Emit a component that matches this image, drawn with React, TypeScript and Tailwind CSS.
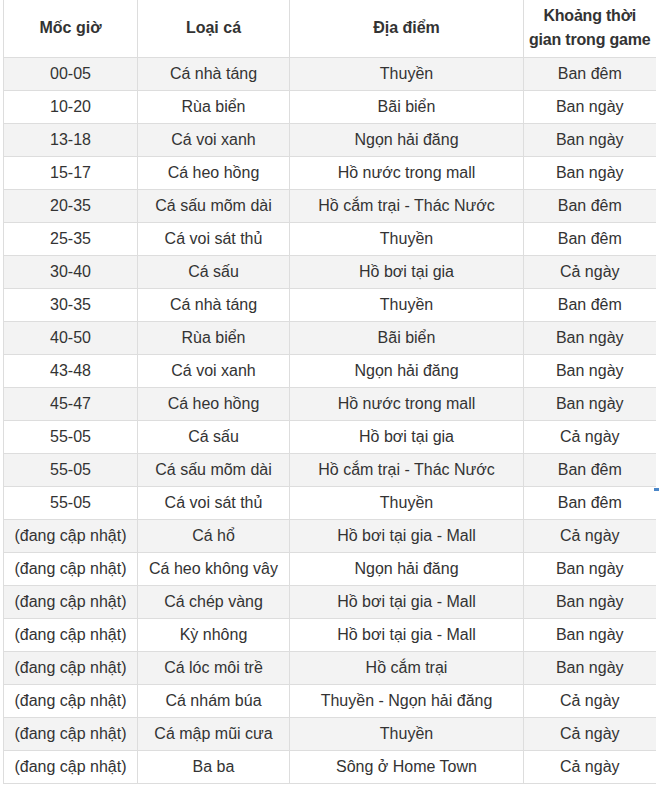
import React from 'react';

const rows: [string, string, string, string][] = [
    ['00-05', 'Cá nhà táng', 'Thuyền', 'Ban đêm'],
    ['10-20', 'Rùa biển', 'Bãi biển', 'Ban ngày'],
    ['13-18', 'Cá voi xanh', 'Ngọn hải đăng', 'Ban ngày'],
    ['15-17', 'Cá heo hồng', 'Hồ nước trong mall', 'Ban ngày'],
    ['20-35', 'Cá sấu mõm dài', 'Hồ cắm trại - Thác Nước', 'Ban đêm'],
    ['25-35', 'Cá voi sát thủ', 'Thuyền', 'Ban đêm'],
    ['30-40', 'Cá sấu', 'Hồ bơi tại gia', 'Cả ngày'],
    ['30-35', 'Cá nhà táng', 'Thuyền', 'Ban đêm'],
    ['40-50', 'Rùa biển', 'Bãi biển', 'Ban ngày'],
    ['43-48', 'Cá voi xanh', 'Ngọn hải đăng', 'Ban ngày'],
    ['45-47', 'Cá heo hồng', 'Hồ nước trong mall', 'Ban ngày'],
    ['55-05', 'Cá sấu', 'Hồ bơi tại gia', 'Cả ngày'],
    ['55-05', 'Cá sấu mõm dài', 'Hồ cắm trại - Thác Nước', 'Ban đêm'],
    ['55-05', 'Cá voi sát thủ', 'Thuyền', 'Ban đêm'],
    ['(đang cập nhật)', 'Cá hổ', 'Hồ bơi tại gia - Mall', 'Cả ngày'],
    ['(đang cập nhật)', 'Cá heo không vây', 'Ngọn hải đăng', 'Ban ngày'],
    ['(đang cập nhật)', 'Cá chép vàng', 'Hồ bơi tại gia - Mall', 'Ban ngày'],
    ['(đang cập nhật)', 'Kỳ nhông', 'Hồ bơi tại gia - Mall', 'Ban ngày'],
    ['(đang cập nhật)', 'Cá lóc môi trề', 'Hồ cắm trại', 'Ban ngày'],
    ['(đang cập nhật)', 'Cá nhám búa', 'Thuyền - Ngọn hải đăng', 'Cả ngày'],
    ['(đang cập nhật)', 'Cá mập mũi cưa', 'Thuyền', 'Cả ngày'],
    ['(đang cập nhật)', 'Ba ba', 'Sông ở Home Town', 'Cả ngày'],
];

const cell = 'border border-[#dddddd] px-1 text-center align-middle';

export default function App() {
    return (
        <div className="relative w-[659px] h-[789px] bg-white pl-[3px] font-['Liberation_Sans',Arial,sans-serif] text-[16px] text-[#333333]">
            <table className="border-collapse table-fixed w-[652px] border-t-0">
                <colgroup>
                    <col className="w-[134px]" />
                    <col className="w-[152px]" />
                    <col className="w-[234px]" />
                    <col className="w-[132px]" />
                </colgroup>
                <thead>
                    <tr className="h-[57px]">
                        <th className={`${cell} border-t-0 font-bold leading-[22px]`}>Mốc giờ</th>
                        <th className={`${cell} border-t-0 font-bold leading-[22px]`}>Loại cá</th>
                        <th className={`${cell} border-t-0 font-bold leading-[22px]`}>Địa điểm</th>
                        <th className="border border-t-0 border-r-0 border-[#dddddd] px-0 text-center align-middle font-bold leading-[24px] whitespace-nowrap tracking-[-0.2px]">
                            Khoảng thời
                            <br />
                            gian trong game
                        </th>
                    </tr>
                </thead>
                <tbody>
                    {rows.map((r, i) => (
                        <tr key={i} className={i % 2 === 0 ? 'h-[33px] bg-[#f3f3f3]' : 'h-[33px] bg-white'}>
                            <td className={`${cell} py-0 leading-[20px]`}>{r[0]}</td>
                            <td className={`${cell} py-0 leading-[20px]`}>{r[1]}</td>
                            <td className={`${cell} py-0 leading-[20px]`}>{r[2]}</td>
                            <td className={`${cell} border-r-0 py-0 leading-[20px]`}>{r[3]}</td>
                        </tr>
                    ))}
                </tbody>
            </table>
            <span className="absolute left-[654px] top-[488px] w-[5px] h-[3px] bg-[#4a86c8]" />
        </div>
    );
}
